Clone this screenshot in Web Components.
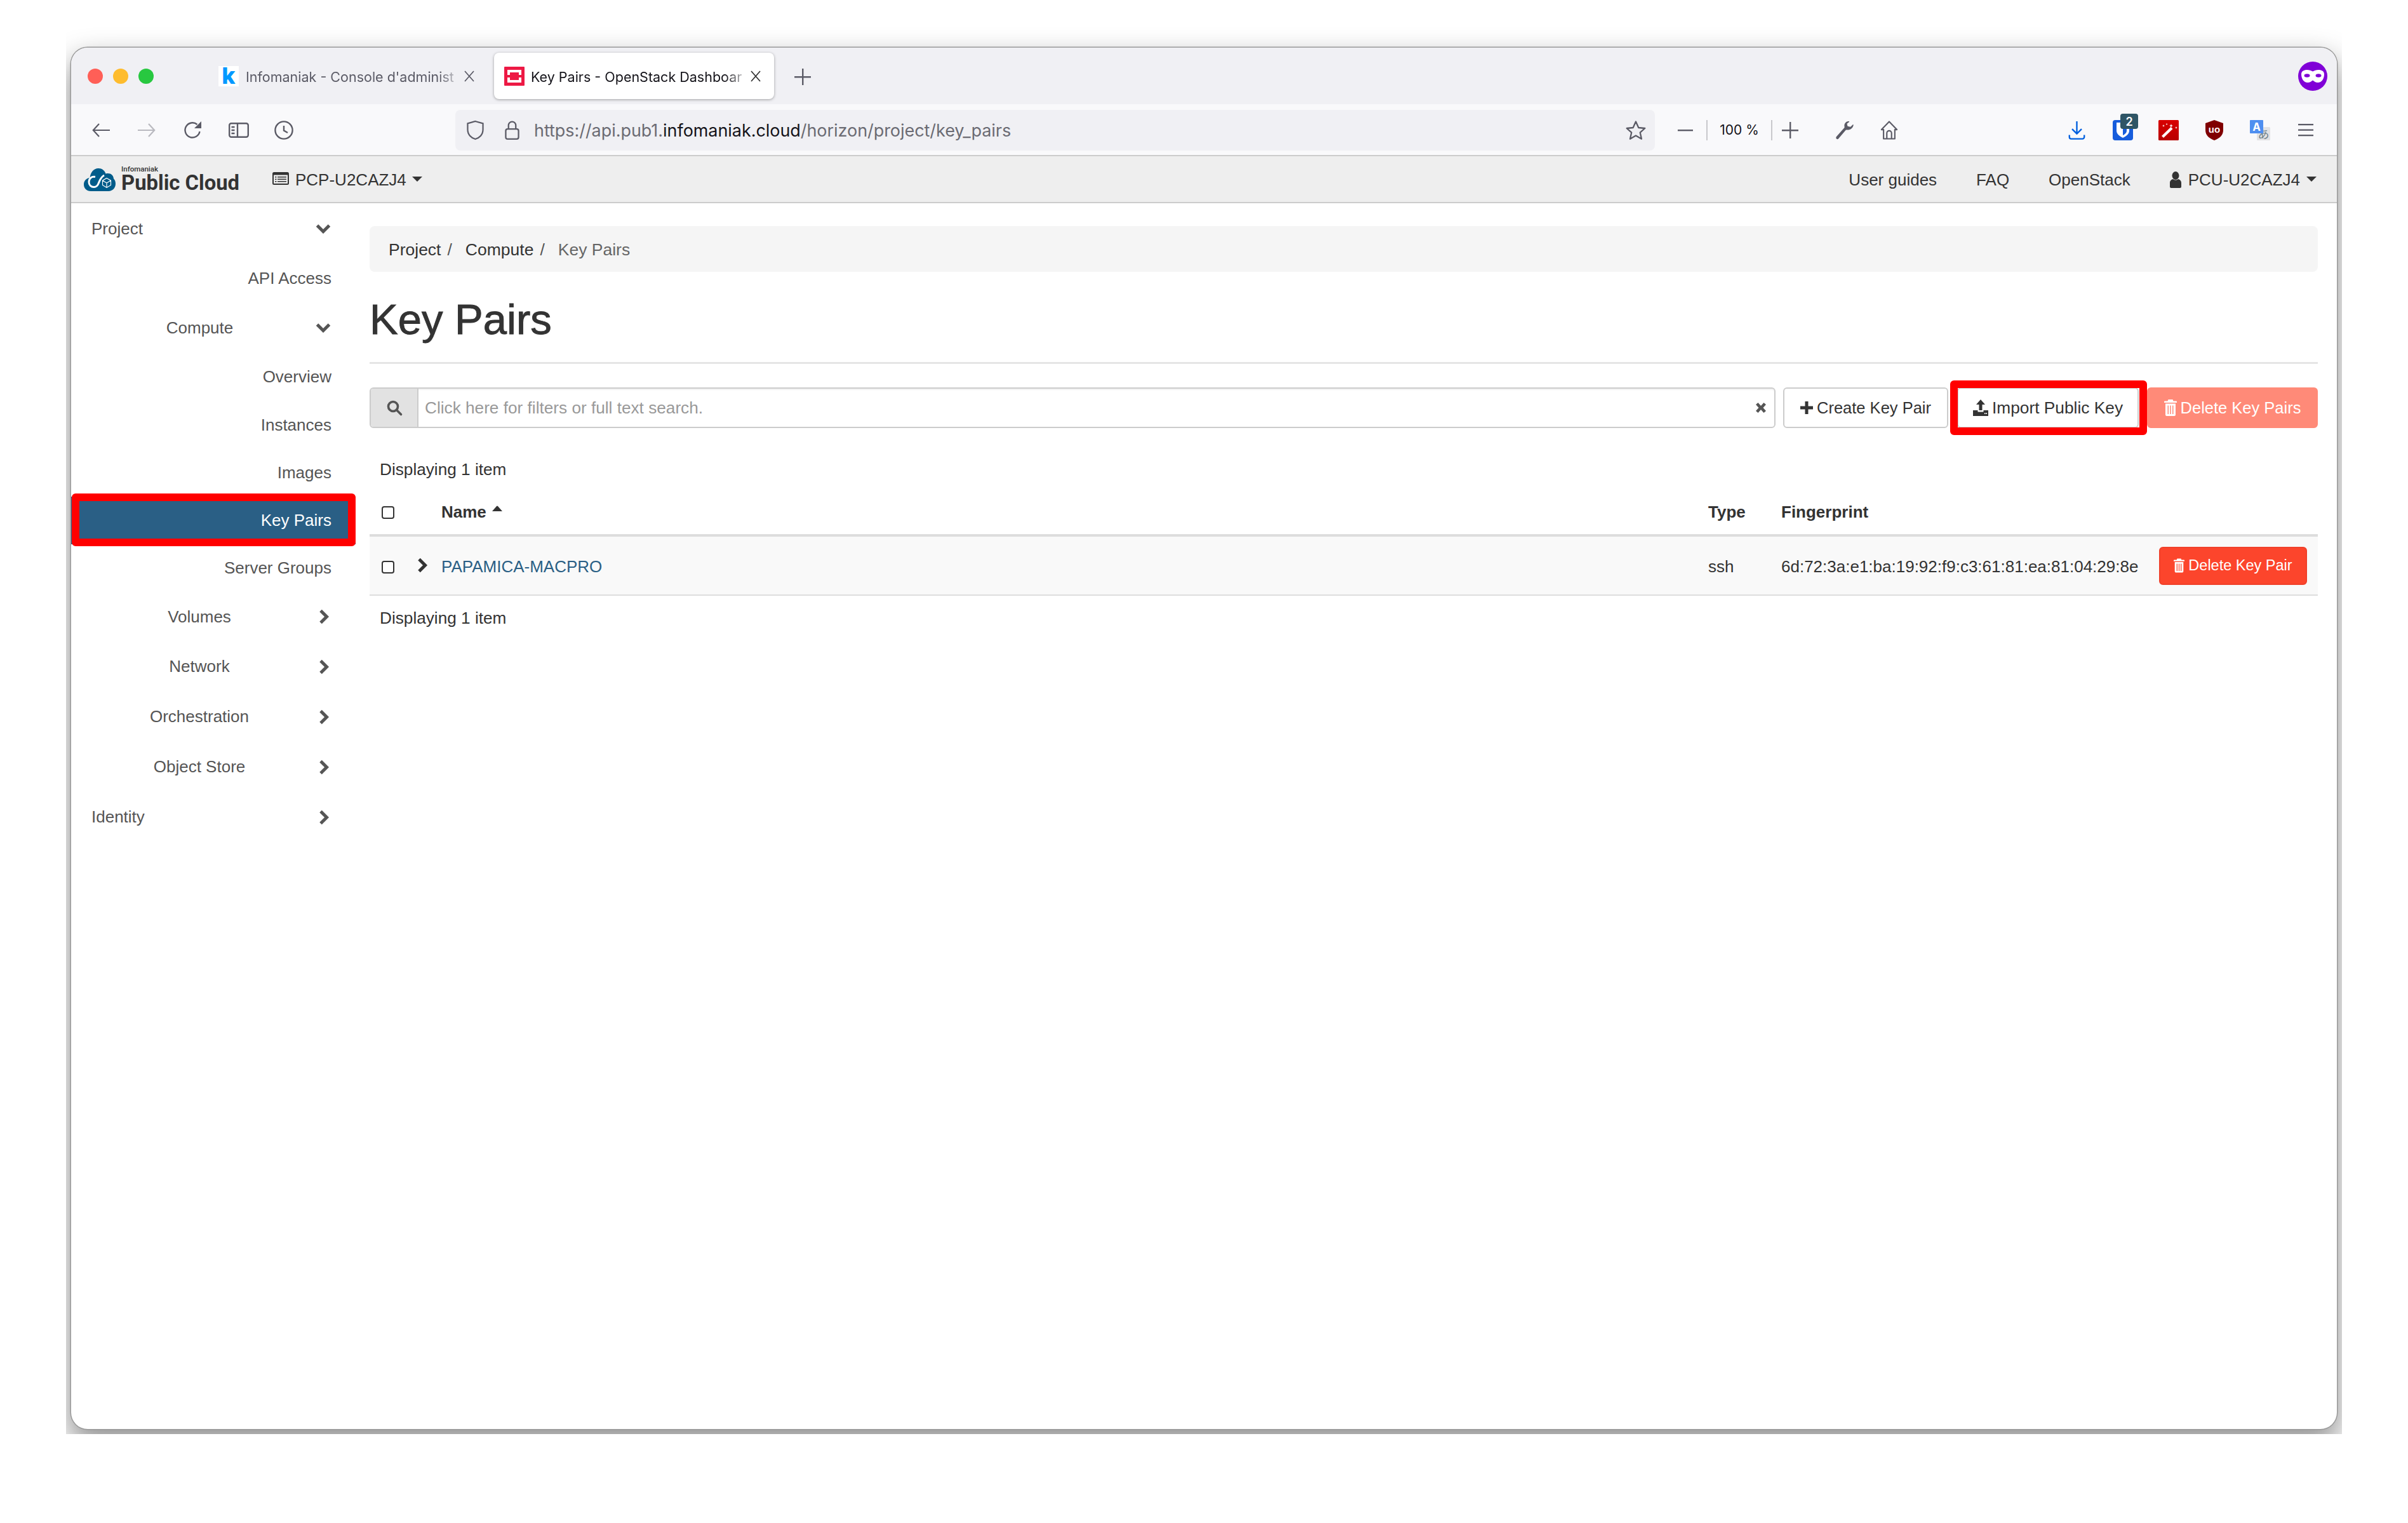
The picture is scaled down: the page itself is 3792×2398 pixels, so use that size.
<!DOCTYPE html>
<html lang="en">
<head>
<meta charset="utf-8">
<title>Key Pairs - OpenStack Dashboard</title>
<style>
  html, body { margin: 0; background: #fff; }
  body { width: 3792px; height: 2398px; overflow: hidden; font-family: "Liberation Sans", Arial, sans-serif; }
</style>
</head>
<body>
<browser-window>
  <tab-strip slot="tabs">
    <browser-tab title-text="Infomaniak - Console d'administ" favicon="k"></browser-tab>
    <browser-tab title-text="Key Pairs - OpenStack Dashboar" favicon="stack" active></browser-tab>
  </tab-strip>
  <nav-toolbar slot="toolbar"></nav-toolbar>
  <app-navbar slot="page"></app-navbar>
  <dashboard-layout slot="page">
    <side-nav slot="side">
      <side-item h="78" align="left" chevron="down">Project</side-item>
      <side-item h="78">API Access</side-item>
      <side-item h="78" align="center" chevron="down">Compute</side-item>
      <side-item h="77">Overview</side-item>
      <side-item h="75">Instances</side-item>
      <side-item h="75">Images</side-item>
      <side-item h="75" active>Key Pairs</side-item>
      <side-item h="75">Server Groups</side-item>
      <side-item h="78" align="center" chevron="right">Volumes</side-item>
      <side-item h="79" align="center" chevron="right">Network</side-item>
      <side-item h="79" align="center" chevron="right">Orchestration</side-item>
      <side-item h="79" align="center" chevron="right">Object Store</side-item>
      <side-item h="79" align="left" chevron="right">Identity</side-item>
    </side-nav>
    <key-pairs-page slot="main"></key-pairs-page>
  </dashboard-layout>
</browser-window>

<script>
// icons used all over the page, keyed by name
const G = '#5b5b66';
const ICONS = {
  back: `<svg viewBox="0 0 28 24" fill="none" stroke="${G}" stroke-width="2.2"><path d="M28 12H2M11 2 1.8 12 11 22"/></svg>`,
  forward: `<svg viewBox="0 0 28 24" fill="none" stroke="#b9b9bf" stroke-width="2.2"><path d="M0 12h26M17 2l9.2 10L17 22"/></svg>`,
  reload: `<svg viewBox="0 0 30 30" fill="none" stroke="${G}" stroke-width="2.4"><path d="M25.5 17a11.6 11.6 0 1 1-4-11"/><path d="M28 1v11H17z" fill="${G}" stroke="none"/></svg>`,
  sidebar: `<svg viewBox="0 0 32 24" fill="none" stroke="${G}" stroke-width="2.4"><rect x="1.2" y="1.2" width="29.6" height="21.6" rx="3"/><path d="M14 1v22M4.500 7h5M4.500 12h5M4.500 17h5"/></svg>`,
  clock: `<svg viewBox="0 0 30 30" fill="none" stroke="${G}" stroke-width="2.4"><circle cx="15" cy="15" r="13.600"/><path d="M15 8v7.500l6 3.500"/></svg>`,
  shield: `<svg viewBox="0 0 28 32" fill="none" stroke="${G}" stroke-width="2.3"><path d="M14 1.500 26.500 5v10c0 8-5.500 13.500-12.500 15.500C7 28.500 1.500 23 1.500 15V5z"/></svg>`,
  lock: `<svg viewBox="0 0 24 32" fill="none" stroke="${G}" stroke-width="2.4"><rect x="1.500" y="14" width="21" height="16.500" rx="3"/><path d="M6 14V8a6 6 0 0 1 12 0v6"/></svg>`,
  star: `<svg viewBox="0 0 32 30" fill="none" stroke="${G}" stroke-width="2.3" stroke-linejoin="round"><path d="M16 1.500l4.300 9.500 10 1-7.500 6.700 2.200 10L16 23.600 7 28.700l2.200-10L1.700 12l10-1z"/></svg>`,
  minus: `<svg viewBox="0 0 24 4"><rect width="24" height="2.400" y="1" fill="${G}"/></svg>`,
  plus: `<svg viewBox="0 0 26 26"><path d="M12 0h2.400v12H26v2.400H14.400V26H12V14.400H0V12h12z" fill="${G}"/></svg>`,
  wrench: `<svg viewBox="0 0 30 30"><path d="M20 1c-4 1-6 4-5.500 8 .1 1 .3 1.500 0 2L2 25c-1 1.200-1 2.500 0 3.500s2.300.8 3.200-.2L16.500 15c.6-.6 1.300-.6 2.200-.5 5 .3 9-2.500 10-7.500.1-.8-.7-1.200-1.200-.6l-3.500 3.400-4.500-1-1-4L22 2c.5-.6.200-1.200-2-1z" fill="${G}"/></svg>`,
  home: `<svg viewBox="0 0 30 32" fill="none" stroke="${G}" stroke-width="2.300" stroke-linejoin="round"><path d="M15 1.500 28 15h-3.500v15.500h-19V15H2z"/><path d="M11 30.500V21a4 4 0 0 1 8 0v9.500"/></svg>`,
  download: `<svg viewBox="0 0 28 32" fill="none" stroke="#0060df" stroke-width="2.500"><path d="M14 1v20M6 14l8 8 8-8M1.500 24v3.500a3 3 0 0 0 3 3h19a3 3 0 0 0 3-3V24"/></svg>`,
  bitwarden: `<svg viewBox="0 0 40 42"><rect y="10" width="32" height="32" rx="4" fill="#175ddc"/><path d="M6 14h20v13c0 5-5 8.500-10 11-5-2.500-10-6-10-11z" fill="#fff"/><path d="M16 18h6v9c0 3-3 5.500-6 7z" fill="#175ddc"/><rect x="12" y="0" width="28" height="24" rx="4" fill="#2f5666"/><text x="26" y="18.500" text-anchor="middle" font-family="Inter" font-weight="600" font-size="18" fill="#fff">2</text></svg>`,
  wand: `<svg viewBox="0 0 32 32"><defs><linearGradient id="w" x1="0" y1="0" x2="0" y2="1"><stop offset="0" stop-color="#d90000"/><stop offset="1" stop-color="#b80000"/></linearGradient></defs><rect width="32" height="32" rx="1.500" fill="url(#w)"/><path d="M5 25 19.500 11l3 3L8 28z" fill="#fff"/><path d="M20 6l.8 2.200L23 9l-2.200.8L20 12l-.8-2.200L17 9l2.200-.8zM28 10l.6 1.400 1.400.6-1.400.6L28 14l-.6-1.400-1.400-.6 1.400-.6zM8 7l.6 1.400 1.400.6-1.400.6L8 11l-.6-1.400L6 9l1.400-.4zM13 5l.5 1 1 .5-1 .5-.5 1-.5-1-1-.5 1-.5z" fill="#fff"/></svg>`,
  ublock: `<svg viewBox="0 0 28 32"><path d="M14 0l14 5v11c0 8-6 13-14 16C6 29 0 24 0 16V5z" fill="#800000"/><text x="14" y="20" text-anchor="middle" font-family="Liberation Sans" font-weight="700" font-size="15" fill="#fff">uo</text></svg>`,
  translate: `<svg viewBox="0 0 32 32"><rect x="11" y="11" width="21" height="21" rx="1.500" fill="#e2e2e4"/><text x="21.500" y="29" text-anchor="middle" font-family="Noto Sans CJK JP" font-size="18" fill="#6f8189">あ</text><rect width="21" height="21" rx="1" fill="#4f8ff0"/><text x="10.500" y="17" text-anchor="middle" font-family="Inter" font-weight="700" font-size="17" fill="#fff">A</text></svg>`,
  menu: `<svg viewBox="0 0 24 20" fill="${G}"><rect width="24" height="2.300" y="0"/><rect width="24" height="2.300" y="8.500"/><rect width="24" height="2.300" y="17"/></svg>`,
  mask: `<svg viewBox="0 0 46 46"><circle cx="23" cy="23" r="23" fill="#8000d7"/><path d="M5 20c0-5 4-7 9-7 4 0 6 1 9 2.500 3-1.500 5-2.500 9-2.500 5 0 9 2 9 7 0 7-4 13-10 13-3.500 0-5.500-1.800-8-3.500-2.500 1.700-4.500 3.500-8 3.500-6 0-10-6-10-13z" fill="#fff"/><ellipse cx="14" cy="22" rx="4.500" ry="2.800" fill="#8000d7"/><ellipse cx="32" cy="22" rx="4.500" ry="2.800" fill="#8000d7"/></svg>`,
  logo: `<svg viewBox="0 0 50 36"><path d="M11 36C4.500 36 0 31.500 0 25.500 0 19.500 4 15.500 9.500 15 10.500 6.500 15.500 0 23 0c5.500 0 9.500 3 11.500 8.500C36 8 37 8 38 8c5 0 8.500 3 9 8.500 2 1.500 3 4.500 3 8C50 31 45 36 39 36z" fill="#005c8a"/><path d="M18 13.500c-6-1-10 2.500-10 8 0 5 3.500 8 8 8 3.500 0 5.500-1.800 7-5.500 2-5 3.500-10 9-13" fill="none" stroke="#fff" stroke-width="3"/><path d="M36 15.500l6.500 3.700v7.300L36 30.200l-6.500-3.700v-7.300zM29.500 19.200l6.500 3.800 6.500-3.800M36 23v7.200" fill="none" stroke="#fff" stroke-width="1.200"/></svg>`,
  'list-alt': `<svg viewBox="0 0 26 20"><rect width="26" height="20" rx="2.500" fill="#333"/><rect x="2" y="4.500" width="22" height="13.500" fill="#eee"/><path d="M4 7h2.500v1.500H4zM8 7h14v1.500H8zM4 10.500h2.500V12H4zM8 10.500h14V12H8zM4 14h2.500v1.500H4zM8 14h14v1.500H8z" fill="#333"/></svg>`,
  user: `<svg viewBox="0 0 18 26"><ellipse cx="9" cy="6.500" rx="5.500" ry="6.500" fill="#333"/><path d="M0 24v-6c0-4 3-5.500 5-6 2.500 2 5.500 2 8 0 2 .5 5 2 5 6v6c0 1-1 2-2 2H2c-1 0-2-1-2-2z" fill="#333"/></svg>`,
  search: `<svg viewBox="0 0 24 24" fill="none" stroke="#555" stroke-width="3.600"><circle cx="10" cy="10" r="7.500"/><path d="M15.500 15.500 22.500 22.500" stroke-linecap="round"/></svg>`,
  remove: `<svg viewBox="0 0 16 18"><path d="M3.500 1 8 6l4.500-5L16 4l-4.500 5L16 14l-3.500 3L8 12l-4.500 5L0 14l4.500-5L0 4z" fill="#555"/></svg>`,
  gplus: `<svg viewBox="0 0 20 20"><path d="M7.500 0h5v7.500H20v5h-7.500V20h-5v-7.500H0v-5h7.500z" fill="#333"/></svg>`,
  upload: `<svg viewBox="0 0 24 26"><path d="M12 0l7 8h-4.500v9h-5V8H5z" fill="#333"/><path d="M0 17h7.500v2.500h9V17H24v9H0z" fill="#333"/><rect x="18" y="21" width="1.500" height="2" fill="#fff"/><rect x="20.500" y="21" width="1.500" height="2" fill="#fff"/></svg>`,
  trash: `<svg viewBox="0 0 20 26"><path d="M6.500 0h7l1 2.500H19a1 1 0 0 1 1 1V5H0V3.500a1 1 0 0 1 1-1h4.500zM2 6.500h16V24a2 2 0 0 1-2 2H4a2 2 0 0 1-2-2z" fill="currentColor"/><path d="M5.500 9.500h1.500V23H5.500zM9.250 9.500h1.500V23h-1.500zM13 9.500h1.500V23H13z" fill="var(--slit, #f66)"/></svg>`,
  'chev-down': `<svg viewBox="0 0 24 16" fill="none" stroke="currentColor" stroke-width="5"><path d="M2.500 3 12 12.500 21.500 3"/></svg>`,
  'chev-right': `<svg viewBox="0 0 16 24" fill="none" stroke="currentColor" stroke-width="5"><path d="M3 2.500 12.500 12 3 21.500"/></svg>`,
  caret: `<svg viewBox="0 0 16 8"><path d="M0 0h16L8 8z" fill="currentColor"/></svg>`,
  'caret-up': `<svg viewBox="0 0 16 9"><path d="M0 9 7 1a1.400 1.400 0 0 1 2 0l7 8z" fill="#333"/></svg>`,
  k: `<svg viewBox="0 0 32 32"><rect width="32" height="32" fill="#fff"/><text x="16" y="28" text-anchor="middle" font-family="Inter" font-weight="800" font-size="36" fill="#0098ff">k</text></svg>`,
  stack: `<svg viewBox="0 0 32 30"><rect width="32" height="30" rx="1" fill="#ed1944"/><path d="M5 5h22v8h-4V9H9v4H5zM5 17h4v4h14v-4h4v8H5z" fill="#fff"/></svg>`
};

class XIcon extends HTMLElement {
  connectedCallback() {
    const w = this.getAttribute('w'), h = this.getAttribute('h');
    this.attachShadow({ mode: 'open' }).innerHTML = `
      <style>
        :host { display: inline-block; flex: none; width: ${w}px; height: ${h}px; line-height: 0; }
        svg { width: 100%; height: 100%; display: block; overflow: visible; }
      </style>${ICONS[this.getAttribute('name')]}`;
  }
}
customElements.define('x-icon', XIcon);

class BrowserWindow extends HTMLElement {
  constructor() {
    super();
    this.attachShadow({ mode: 'open' }).innerHTML = `
      <style>
        :host { display: block; width: 3584px; height: 2258px; margin-left: 104px; overflow: hidden; }
        .win {
          width: 3568px; height: 2175px; margin: 75px 8px 0;
          background: #fff; border-radius: 26px; overflow: hidden;
          box-shadow: 0 0 0 1.5px #9a9a9a, 0 22px 46px 4px rgba(0,0,0,.42);
          display: flex; flex-direction: column;
        }
      </style>
      <div class="win">
        <slot name="tabs"></slot>
        <slot name="toolbar"></slot>
        <slot name="page"></slot>
      </div>`;
  }
}
customElements.define('browser-window', BrowserWindow);

class TabStrip extends HTMLElement {
  constructor() {
    super();
    this.attachShadow({ mode: 'open' }).innerHTML = `
      <style>
        :host { display: flex; align-items: center; height: 89px; background: #f0f0f4; flex: none; }
        .dots { display: flex; gap: 16px; margin-left: 26px; width: 190px; }
        .dots i { width: 24px; height: 24px; border-radius: 50%; }
        .newtab { margin-left: 32px; margin-top: 2px; }
        .spacer { flex: 1; }
        .mask { margin-right: 15px; }
      </style>
      <div class="dots">
        <i style="background:#ff5f57"></i><i style="background:#febc2e"></i><i style="background:#28c840"></i>
      </div>
      <slot></slot>
      <x-icon class="newtab" name="plus" w="26" h="26"></x-icon>
      <div class="spacer"></div>
      <x-icon class="mask" name="mask" w="46" h="46"></x-icon>`;
  }
}
customElements.define('tab-strip', TabStrip);

class BrowserTab extends HTMLElement {
  constructor() {
    super();
    const active = this.hasAttribute('active');
    this.attachShadow({ mode: 'open' }).innerHTML = `
      <style>
        :host {
          display: flex; align-items: center; box-sizing: border-box;
          width: ${active ? 441 : 446}px; height: 73px; padding-left: 16px;
          margin-right: ${active ? 0 : 4}px; border-radius: 8px;
          ${active ? 'background: #fff; box-shadow: 0 1px 4px rgba(0,0,0,.35);' : ''}
          font-family: Inter, sans-serif; font-size: 21.500px; color: ${active ? '#15141a' : '#5b5b66'};
        }
        .label {
          width: ${active ? 339 : 337}px; margin-left: ${active ? 10 : 11}px; padding-top: 3px; white-space: nowrap;
          -webkit-mask-image: linear-gradient(to right, #000 90%, rgba(0,0,0,.15));
        }
        .x { width: 18px; height: 18px; margin-left: 6px; flex: none; }
      </style>
      <x-icon name="${this.getAttribute('favicon')}" w="32" h="${active ? 30 : 32}"></x-icon>
      <span class="label">${this.getAttribute('title-text')}</span>
      <svg class="x" viewBox="0 0 18 18" stroke="${active ? '#333' : '#5b5b66'}" stroke-width="1.800"><path d="M2 1l14 16M16 1 2 17"/></svg>`;
  }
}
customElements.define('browser-tab', BrowserTab);

class NavToolbar extends HTMLElement {
  constructor() {
    super();
    this.attachShadow({ mode: 'open' }).innerHTML = `
      <style>
        :host {
          display: flex; align-items: center; flex: none; box-sizing: border-box;
          height: 82px; padding-top: 2px; padding-left: 33px;
          background: #f9f9fb; border-bottom: 2px solid #ccc;
          font-family: Inter, sans-serif;
        }
        .url {
          display: flex; align-items: center; width: 1889px; height: 64px; margin-left: 256px;
          background: #f0f0f4; border-radius: 8px; box-sizing: border-box; padding-left: 18px;
        }
        .url-text { margin-left: 23px; font-size: 26.900px; color: #6b6b73; white-space: nowrap; flex: 1; }
        .url-text b { font-weight: 400; color: #15141a; }
        .zoom { font-size: 21px; color: #15141a; width: 100px; text-align: center; border-left: 2px solid #c8c8cc; border-right: 2px solid #c8c8cc; line-height: 32px; margin-left: 21px; box-sizing: content-box; white-space: nowrap; }
      </style>
      <x-icon name="back" w="28" h="24"></x-icon>
      <x-icon name="forward" w="28" h="24" style="margin-left:44px"></x-icon>
      <x-icon name="reload" w="30" h="30" style="margin-left:44px"></x-icon>
      <x-icon name="sidebar" w="32" h="24" style="margin-left:41px"></x-icon>
      <x-icon name="clock" w="30" h="30" style="margin-left:40px"></x-icon>
      <div class="url" style="margin-left:255px">
        <x-icon name="shield" w="27" h="32"></x-icon>
        <x-icon name="lock" w="23" h="32" style="margin-left:33px"></x-icon>
        <span class="url-text">https://api.pub1.<b>infomaniak.cloud</b>/horizon/project/key_pairs</span>
        <x-icon name="star" w="32" h="30" style="margin-right:14px"></x-icon>
      </div>
      <x-icon name="minus" w="24" h="4" style="margin-left:36px"></x-icon>
      <span class="zoom">100 %</span>
      <x-icon name="plus" w="26" h="26" style="margin-left:15px"></x-icon>
      <x-icon name="wrench" w="30" h="30" style="margin-left:58px"></x-icon>
      <x-icon name="home" w="28" h="32" style="margin-left:41px"></x-icon>
      <x-icon name="download" w="27" h="30" style="margin-left:268px"></x-icon>
      <x-icon name="bitwarden" w="40" h="42" style="margin-left:43px;margin-top:-11px"></x-icon>
      <x-icon name="wand" w="32" h="32" style="margin-left:32px"></x-icon>
      <x-icon name="ublock" w="28" h="32" style="margin-left:42px"></x-icon>
      <x-icon name="translate" w="32" h="32" style="margin-left:42px"></x-icon>
      <x-icon name="menu" w="24" h="20" style="margin-left:44px"></x-icon>`;
  }
}
customElements.define('nav-toolbar', NavToolbar);

class AppNavbar extends HTMLElement {
  constructor() {
    super();
    this.attachShadow({ mode: 'open' }).innerHTML = `
      <style>
        :host {
          display: flex; align-items: center; flex: none; box-sizing: border-box;
          height: 74px; padding: 2px 32px 0 20px;
          background: #eee; border-bottom: 2px solid #ccc; color: #333; font-size: 26px;
        }
        .brand { margin-left: 9px; width: 238px; height: 60px; display: flex; flex-direction: column; justify-content: center; color: #333; font-family: Roboto, sans-serif; margin-top: -1px; }
        .brand small { font-size: 11.500px; line-height: 12px; font-weight: 500; }
        .brand b { font-size: 32.800px; line-height: 33px; font-weight: 700; }
        .item { display: inline-flex; align-items: center; white-space: nowrap; }
        .spacer { flex: 1; }
      </style>
      <x-icon name="logo" w="50" h="36"></x-icon>
      <div class="brand"><small>Infomaniak</small><b>Public Cloud</b></div>
      <span class="item"><x-icon name="list-alt" w="26" h="20" style="margin-right:10px;margin-top:-4px"></x-icon>PCP-U2CAZJ4<x-icon name="caret" w="16" h="8" style="margin-left:9px;margin-top:-2px"></x-icon></span>
      <div class="spacer"></div>
      <span class="item">User guides</span>
      <span class="item" style="margin-left:62px">FAQ</span>
      <span class="item" style="margin-left:62px">OpenStack</span>
      <span class="item" style="margin-left:62px"><x-icon name="user" w="18" h="26" style="margin-right:11px"></x-icon>PCU-U2CAZJ4<x-icon name="caret" w="16" h="8" style="margin-left:10px;margin-top:-2px"></x-icon></span>`;
  }
}
customElements.define('app-navbar', AppNavbar);

class DashboardLayout extends HTMLElement {
  constructor() {
    super();
    this.attachShadow({ mode: 'open' }).innerHTML = `
      <style>
        :host { display: flex; flex: 1; min-height: 0; }
        .side { width: 470px; flex: none; position: relative; }
        .main { flex: 1; min-width: 0; padding-right: 30px; }
      </style>
      <div class="side"><slot name="side"></slot></div>
      <div class="main"><slot name="main"></slot></div>`;
  }
}
customElements.define('dashboard-layout', DashboardLayout);

class SideNav extends HTMLElement {
  constructor() {
    super();
    this.attachShadow({ mode: 'open' }).innerHTML = `
      <style>:host { display: flex; flex-direction: column; padding-top: 1px; }</style><slot></slot>`;
  }
}
customElements.define('side-nav', SideNav);

class SideItem extends HTMLElement {
  constructor() {
    super();
    const align = this.getAttribute('align') || 'right';
    const chev = this.getAttribute('chevron');
    const active = this.hasAttribute('active');
    const icon = chev === 'down'
      ? '<x-icon class="c" name="chev-down" w="24" h="16" style="margin-right:1px"></x-icon>'
      : chev === 'right' ? '<x-icon class="c" name="chev-right" w="16" h="24" style="margin-left:6px;margin-right:4px"></x-icon>' : '';
    this.attachShadow({ mode: 'open' }).innerHTML = `
      <style>
        :host {
          display: flex; align-items: center; box-sizing: border-box; position: relative;
          height: ${this.getAttribute('h')}px; padding: 0 ${active ? 38 : 0}px 0 32px;
          color: ${active ? '#fff' : '#555'}; background: ${active ? '#2a5f85' : 'none'};
          font-size: 26px;
          ${active ? 'width: 448px;' : 'width: 410px;'}
        }
        .t { flex: 1; white-space: nowrap; text-align: ${align}; }
        :host([align=center]) .t { padding-right: 12px; }
        .c { color: #555; }
        /* red highlight drawn over the selected row */
        .mark { position: absolute; left: 1px; right: 0; top: -5px; bottom: -3px; border: 12px solid #f00; border-radius: 6px; }
      </style>
      <span class="t"><slot></slot></span>${icon}${active ? '<div class="mark"></div>' : ''}`;
  }
}
customElements.define('side-item', SideItem);

class ActionBtn extends HTMLElement {
  constructor() {
    super();
    const kind = this.getAttribute('kind') || 'default';
    const colors = {
      default: 'background:#fff;border:2px solid #ccc;color:#333;',
      muted: 'background:#ff8a78;border:2px solid #ff8a78;color:#fff;--slit:#ff8a78;',
      danger: 'background:#fc452c;border:2px solid #f0402a;color:#fff;--slit:#fc452c;'
    };
    this.attachShadow({ mode: 'open' }).innerHTML = `
      <style>
        :host {
          display: inline-flex; align-items: center; justify-content: center; box-sizing: border-box;
          ${colors[kind]} border-radius: 6px; white-space: nowrap; flex: none;
          font-size: ${this.getAttribute('fs') || 25.500}px; height: ${this.getAttribute('h') || 64}px;
          width: ${this.getAttribute('w')}px; gap: 6px;
        }
      </style>
      <x-icon name="${this.getAttribute('icon')}" w="${this.getAttribute('iw')}" h="${this.getAttribute('ih')}"></x-icon><span><slot></slot></span>`;
  }
}
customElements.define('action-btn', ActionBtn);

class SearchBar extends HTMLElement {
  constructor() {
    super();
    this.attachShadow({ mode: 'open' }).innerHTML = `
      <style>
        :host { display: flex; flex: 1; min-width: 0; height: 64px; box-sizing: border-box; border: 2px solid #ccc; border-radius: 6px; background: #fff; overflow: hidden; box-shadow: inset 0 2px 2px rgba(0,0,0,.06); }
        .addon { width: 73px; flex: none; background: #e2e2e2; border-right: 2px solid #ccc; display: flex; align-items: center; justify-content: center; }
        .ph { flex: 1; padding-left: 10px; display: flex; align-items: center; color: #999; font-size: 26.200px; white-space: nowrap; }
        .x { margin-right: 13px; align-self: center; }
      </style>
      <div class="addon"><x-icon name="search" w="24" h="24"></x-icon></div>
      <div class="ph">Click here for filters or full text search.</div>
      <x-icon class="x" name="remove" w="16" h="18"></x-icon>`;
  }
}
customElements.define('search-bar', SearchBar);

class KeyPairsPage extends HTMLElement {
  constructor() {
    super();
    const cols = 'grid-template-columns: 75px 38px 1995px 115px 1fr;';
    this.attachShadow({ mode: 'open' }).innerHTML = `
      <style>
        :host { display: block; padding-top: 36px; color: #333; font-size: 26px; }
        .crumbs { display: flex; align-items: center; height: 72px; padding: 2px 0 0 30px; box-sizing: border-box; background: #f5f5f5; border-radius: 8px; font-size: 26.500px; white-space: nowrap; }
        .crumbs s { text-decoration: none; color: #555; margin: 0 21px 0 10px; }
        .crumbs em { font-style: normal; color: #666; }
        h1 { margin: 0; height: 145px; box-sizing: border-box; padding-top: 38px; font-size: 67px; line-height: 74px; font-weight: 400; -webkit-text-stroke: .9px #333; border-bottom: 3px solid #e5e5e5; }
        .actions { display: flex; align-items: center; margin-top: 37px; height: 64px; }
        .count { height: 64px; line-height: 68px; padding-left: 16px; margin-top: 31px; font-size: 26.200px; }
        .row { display: grid; ${cols} align-items: center; }
        .head { height: 72px; border-bottom: 4px solid #ddd; box-sizing: content-box; font-weight: 700; font-size: 26px; }
        .head > * { margin-top: 3px; }
        .body { height: 91px; background: #f9f9f9; border-bottom: 2px solid #ddd; font-size: 26px; }
        .body > .txt { margin-top: 4px; }
        .cb { width: 20px; height: 20px; box-sizing: border-box; border: 2px solid #333; border-radius: 4px; margin-left: 19px; background: #fff; }
        .name { display: inline-flex; align-items: center; }
        a { color: #2a5f85; text-decoration: none; }
        .fp { display: flex; align-items: center; justify-content: space-between; padding-right: 17px; white-space: nowrap; }
      </style>
      <div class="crumbs">Project<s>/</s>Compute<s>/</s><em>Key Pairs</em></div>
      <h1>Key Pairs</h1>
      <div class="actions">
        <search-bar></search-bar>
        <action-btn icon="gplus" iw="20" ih="20" w="260" style="margin-left:12px">Create Key Pair</action-btn>
        <action-btn icon="upload" iw="24" ih="26" w="286" fs="26.300" style="margin-left:14px">Import Public Key</action-btn>
        <action-btn kind="muted" icon="trash" iw="20" ih="26" w="269" style="margin-left:13px">Delete Key Pairs</action-btn>
      </div>
      <div class="mark-host" style="position:relative;height:0">
        <div style="position:absolute;left:2489px;top:-75px;width:310px;height:86px;box-sizing:border-box;border:12px solid #f00;border-radius:6px"></div>
      </div>
      <div class="count">Displaying 1 item</div>
      <div class="row head">
        <div class="cb"></div><div></div>
        <div class="name">Name<x-icon name="caret-up" w="16" h="9" style="margin:-12px 0 0 9px"></x-icon></div>
        <div>Type</div><div>Fingerprint</div>
      </div>
      <div class="row body">
        <div class="cb txt"></div>
        <x-icon name="chev-right" w="16" h="24" style="color:#333;margin-top:-2px"></x-icon>
        <a class="txt">PAPAMICA-MACPRO</a>
        <div class="txt">ssh</div>
        <div class="fp"><span class="txt" style="margin-top:4px">6d:72:3a:e1:ba:19:92:f9:c3:61:81:ea:81:04:29:8e</span>
          <action-btn kind="danger" icon="trash" iw="17" ih="23" fs="23.500" h="60" w="233">Delete Key Pair</action-btn></div>
      </div>
      <div class="count" style="margin-top:1px">Displaying 1 item</div>`;
  }
}
customElements.define('key-pairs-page', KeyPairsPage);
</script>
</body>
</html>
